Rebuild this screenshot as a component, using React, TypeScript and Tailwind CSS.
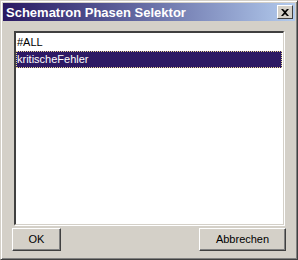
import React, { useState } from "react";

const items = ["#ALL", "kritischeFehler"];

function Win98Button({ label, width, isDefault }: { label: string; width: string; isDefault?: boolean }) {
	return (
		<button
			className={`${width} h-[23px] bg-[#d4d0c8] text-[11px] text-black ${isDefault ? "border border-black" : ""}`}
		>
			<span className="flex h-full w-full items-center justify-center border-t border-l border-t-white border-l-white border-b border-r border-b-[#404040] border-r-[#404040] shadow-[inset_-1px_-1px_0_#808080,inset_1px_1px_0_#d4d0c8]">
				{label}
			</span>
		</button>
	);
}

export default function App() {
	const [selected, setSelected] = useState(1);

	return (
		<div
			className="w-[298px] h-[260px] bg-[#d4d0c8] border border-t-[#d4d0c8] border-l-[#d4d0c8] border-b-[#404040] border-r-[#404040] shadow-[inset_1px_1px_0_#ffffff,inset_-1px_-1px_0_#808080] p-[2px] flex flex-col"
			style={{ fontFamily: '"Liberation Sans", Arial, sans-serif' }}
		>
			{/* title bar */}
			<div className="h-[18px] flex items-center justify-between pl-[3px] pr-[2px] bg-gradient-to-r from-[#2a1862] to-[#b3cbed]">
				<span className="text-white font-bold text-[13px] leading-none tracking-[0px]">
					Schematron Phasen Selektor
				</span>
				<div className="w-[16px] h-[14px] bg-[#d4d0c8] border-t border-l border-t-white border-l-white border-b border-r border-b-[#404040] border-r-[#404040] flex items-center justify-center">
					<svg width="8" height="7" viewBox="0 0 8 7">
						<path d="M0 0h2l2 2 2-2h2L5 3.5 8 7H6L4 5 2 7H0l3-3.5z" fill="#000" />
					</svg>
				</div>
			</div>

			{/* list */}
			<div className="mt-[10px] ml-[11px] w-[270px] h-[194px] bg-white border-t-2 border-l-2 border-t-[#404040] border-l-[#404040] border-b border-r border-b-[#d4d0c8] border-r-[#d4d0c8] shadow-[1px_1px_0_#ffffff] pt-[1px] text-[11px]">
				<ul>
					{items.map((it, i) => (
						<li
							key={it}
							onClick={() => setSelected(i)}
							className={`h-[17px] flex items-center pl-[1px] mr-[1px] ${
								i === selected
									? "bg-[#2d1a64] text-white outline-1 outline-dotted outline-[#e8d890] -outline-offset-1"
									: "text-black"
							}`}
						>
							{it}
						</li>
					))}
				</ul>
			</div>

			{/* buttons */}
			<div className="mt-[3px] ml-[9px] mr-[9px] flex justify-between">
				<Win98Button label="OK" width="w-[49px]" />
				<Win98Button label="Abbrechen" width="w-[87px]" />
			</div>
		</div>
	);
}
